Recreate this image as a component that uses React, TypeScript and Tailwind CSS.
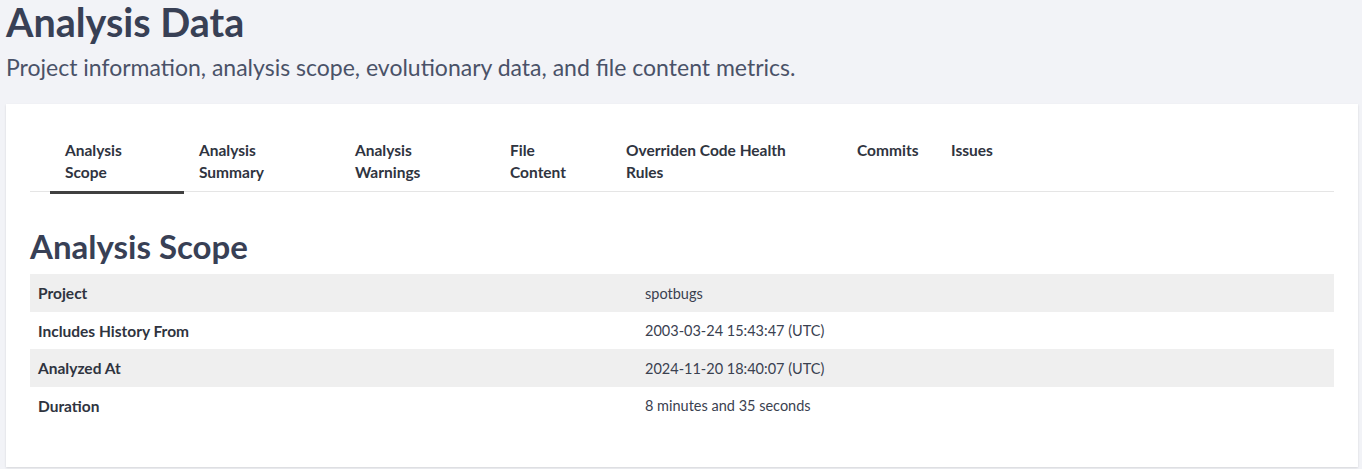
// Analysis Data page

const tabs = [
  { lines: ['Analysis', 'Scope'], width: 'w-[134px]', active: true },
  { lines: ['Analysis', 'Summary'], width: 'w-[156px]' },
  { lines: ['Analysis', 'Warnings'], width: 'w-[155px]' },
  { lines: ['File', 'Content'], width: 'w-[116px]' },
  { lines: ['Overriden Code Health', 'Rules'], width: 'w-[231px]' },
  { lines: ['Commits'], width: 'w-[94px]' },
  { lines: ['Issues'], width: 'w-[94px]' },
];

const rows = [
  { label: 'Project', value: 'spotbugs' },
  { label: 'Includes History From', value: '2003-03-24 15:43:47 (UTC)' },
  { label: 'Analyzed At', value: '2024-11-20 18:40:07 (UTC)' },
  { label: 'Duration', value: '8 minutes and 35 seconds' },
];

export default function App() {
  return (
    <div className="min-h-[469px] bg-[#f2f3f7] font-['Lato',sans-serif] text-[#384055]">
      {/* Page header */}
      <div className="px-[6px]">
        <h1 className="text-[39.5px] font-bold leading-[44px]">Analysis Data</h1>
        <p className="mt-[7px] text-[23px] leading-[32px] text-[#4a5268]">
          Project information, analysis scope, evolutionary data, and file content metrics.
        </p>
      </div>

      {/* Card */}
      <div className="ml-[6px] mr-1 mt-[21px] h-[363px] bg-white px-6 pt-[35px] shadow-[0_1px_2px_rgba(0,0,0,0.12)]">
        {/* Tabs */}
        <div className="flex items-start border-b border-[#e5e5e5] pl-5">
          {tabs.map((tab) => (
            <div
              key={tab.lines.join(' ')}
              className={`${tab.width} shrink-0 px-[15px] pb-[8px] text-[15.5px] font-bold leading-[22px] text-[#2f3440] ${
                tab.active ? '-mb-[3px] border-b-[3px] border-[#404040]' : ''
              }`}
            >
              {tab.lines.map((line) => (
                <span key={line} className="block whitespace-nowrap">
                  {line}
                </span>
              ))}
            </div>
          ))}
        </div>

        {/* Section */}
        <h2 className="mt-[34px] text-[33px] font-bold leading-[40px]">Analysis Scope</h2>
        <div className="mt-[8px]">
          {rows.map((row, i) => (
            <div
              key={row.label}
              className={`grid h-[37.5px] grid-cols-[607px_1fr] items-center px-2 pt-[2px] ${
                i % 2 === 0 ? 'bg-[#efefef]' : 'bg-white'
              }`}
            >
              <span className="text-[15.5px] font-bold text-[#2f3440]">{row.label}</span>
              <span className="text-[14.5px] text-[#3a4150]">{row.value}</span>
            </div>
          ))}
        </div>
      </div>
    </div>
  );
}
